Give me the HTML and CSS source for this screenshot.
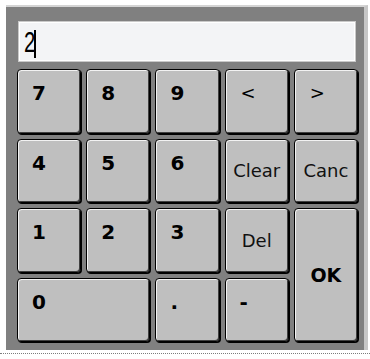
FILE: index.html
```html
<!DOCTYPE html>
<html>
<head>
<meta charset="utf-8">
<link rel="stylesheet" href="styles.css">
</head>
<body>
<div class="screen">
  <div class="panel">
    <div class="display"><span class="val">2</span><span class="caret"></span></div>
    <div class="keys">
      <div class="key num">7</div>
      <div class="key num">8</div>
      <div class="key num">9</div>
      <div class="key sym">&lt;</div>
      <div class="key sym">&gt;</div>
      <div class="key num">4</div>
      <div class="key num">5</div>
      <div class="key num">6</div>
      <div class="key word">Clear</div>
      <div class="key word">Canc</div>
      <div class="key num">1</div>
      <div class="key num">2</div>
      <div class="key num">3</div>
      <div class="key word">Del</div>
      <div class="key ok">OK</div>
      <div class="key num zero">0</div>
      <div class="key num">.</div>
      <div class="key num">-</div>
    </div>
  </div>
  <div class="dots"></div>
</div>
</body>
</html>
```

FILE: styles.css
```css
html, body {
  margin: 0;
  padding: 0;
  background: #ffffff;
}
body {
  width: 370px;
  height: 359px;
  overflow: hidden;
  font-family: "DejaVu Sans", "Liberation Sans", sans-serif;
  color: #000;
}
.screen {
  padding-top: 5px;
}
.panel {
  margin-left: 6px;
  width: 341px;
  background: #808080;
  border-top: 2px solid #d4d4d4;
  border-right: 4px solid #c6c6c6;
  padding: 14px 6px 8px 11px;
}
.display {
  box-sizing: border-box;
  margin-left: 1px;
  width: 338px;
  height: 41px;
  background: #f3f4f6;
  border: 1px solid #c9c9c9;
  box-shadow: inset 1px 1px 0 #ffffff, inset -1px -1px 0 #ffffff;
  display: flex;
  align-items: center;
  padding-left: 5px;
}
.val {
  display: inline-block;
  font-family: "Liberation Sans", sans-serif;
  font-size: 30px;
  line-height: 30px;
  transform: scaleX(0.68);
  transform-origin: left center;
  width: 11px;
  margin-top: 1px;
}
.caret {
  display: inline-block;
  width: 2px;
  height: 28px;
  background: #000;
  margin-left: -1px;
  margin-top: 4px;
}
.keys {
  margin-top: 7px;
  height: 273px;
  display: grid;
  grid-template-columns: repeat(5, 1fr);
  grid-template-rows: repeat(4, 1fr);
  gap: 5px;
}
.key {
  box-sizing: border-box;
  background: #bfbfbf;
  border: 1px solid #000;
  border-radius: 4px;
  box-shadow: inset 1px 1px 0 #f2f2f2, inset -1px -1px 0 #404040, 1px 1px 0 #000;
}
.num, .sym {
  font-weight: bold;
  font-size: 20px;
  line-height: 20px;
  padding: 13px 0 0 14px;
}
.sym {
  font-weight: normal;
  font-size: 18px;
  padding-left: 15px;
}
.word {
  display: flex;
  align-items: center;
  justify-content: center;
  font-size: 18px;
  color: #111;
}
.ok {
  grid-row: 3 / span 2;
  grid-column: 5;
  display: flex;
  align-items: center;
  justify-content: center;
  font-weight: bold;
  font-size: 19px;
}
.zero {
  grid-column: span 2;
}
.dots {
  margin-top: 3px;
  height: 0;
  border-top: 1px dotted #7c7c7c;
}
```
